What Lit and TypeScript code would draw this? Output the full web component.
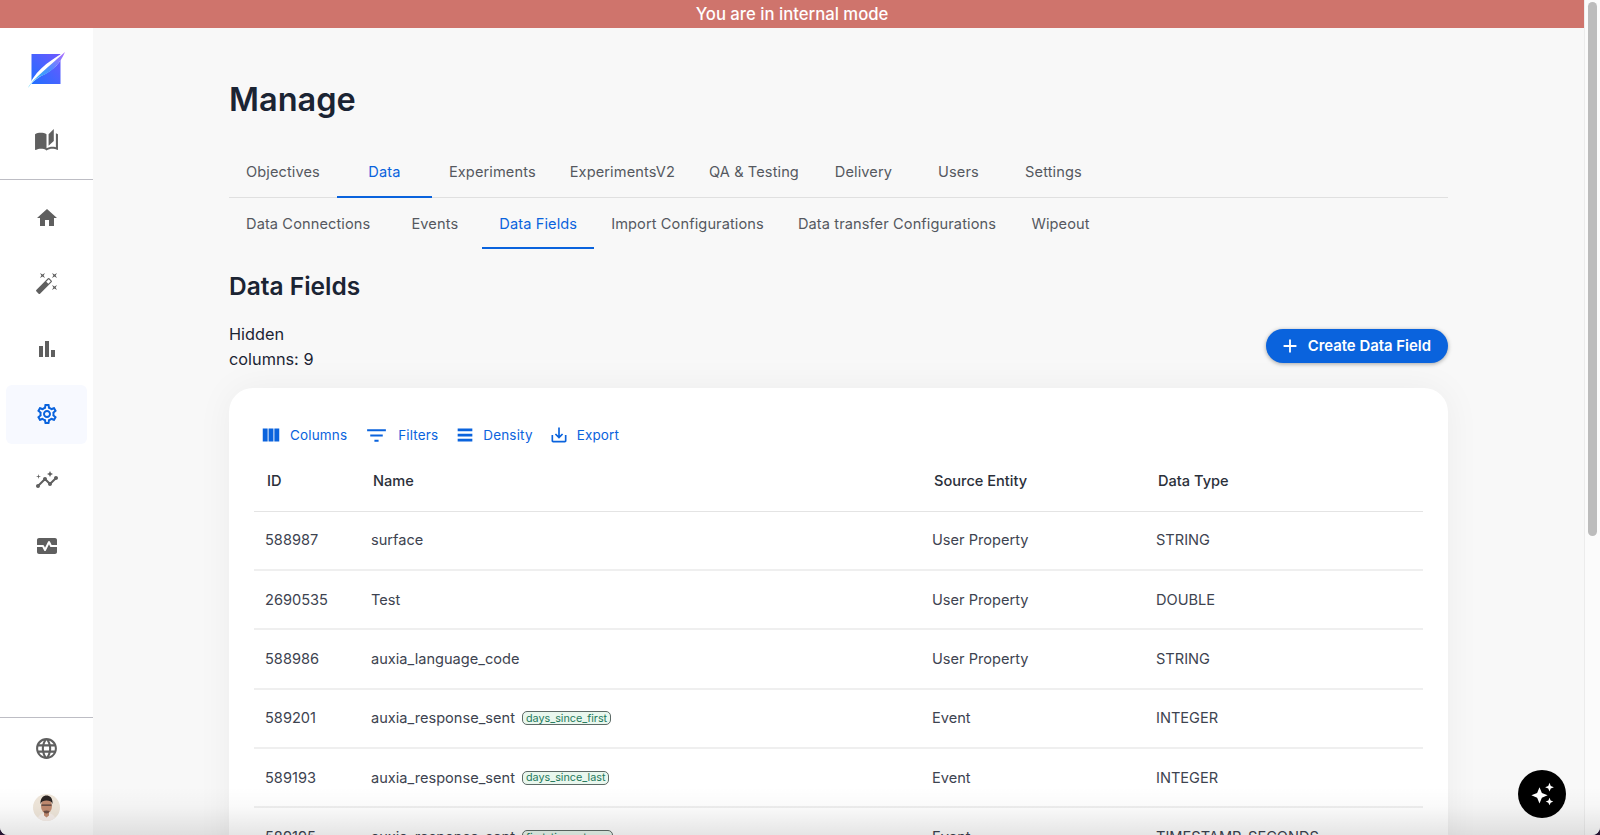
import { LitElement, html, css } from 'lit';
import { customElement } from 'lit/decorators.js';

const ICONS: Record<string, string> = {
  stories: 'M19 1l-5 5v11l5-4.5V1zM1 6v14.65c0 .25.25.5.5.5.1 0 .15-.05.25-.05C3.1 20.45 5.05 20 6.5 20c1.95 0 4.05.4 5.5 1.5V6c-1.45-1.1-3.55-1.5-5.5-1.5S2.45 4.9 1 6zm22 13.5V6c-.6-.45-1.25-.75-2-1v13.5c-1.1-.35-2.3-.5-3.5-.5-1.7 0-4.15.65-5.5 1.5v2c1.35-.85 3.8-1.5 5.5-1.5 1.65 0 3.35.3 4.75 1.05.1.05.15.05.25.05.25 0 .5-.25.5-.5v-1.1z',
  home: 'M10 20v-6h4v6h5v-8h3L12 3 2 12h3v8z',
  wand: 'M7.5 5.6 10 7 8.6 4.5 10 2 7.5 3.4 5 2l1.4 2.5L5 7zm12 9.8L17 14l1.4 2.5L17 19l2.5-1.4L22 19l-1.4-2.5L22 14zM22 2l-2.5 1.4L17 2l1.4 2.5L17 7l2.5-1.4L22 7l-1.4-2.5zm-7.63 5.29a.9959.9959 0 0 0-1.41 0L1.29 18.96c-.39.39-.39 1.02 0 1.41l2.34 2.34c.39.39 1.02.39 1.41 0L16.7 11.05c.39-.39.39-1.02 0-1.41l-2.33-2.35zm-1.03 5.49-2.12-2.12 2.44-2.44 2.12 2.12-2.44 2.44z',
  bars: 'M4 9h4v11H4zm12 4h4v7h-4zm-6-9h4v16h-4z',
  gear: 'M19.43 12.98c.04-.32.07-.64.07-.98 0-.34-.03-.66-.07-.98l2.11-1.65c.19-.15.24-.42.12-.64l-2-3.46c-.09-.16-.26-.25-.44-.25-.06 0-.12.01-.17.03l-2.49 1c-.52-.4-1.08-.73-1.69-.98l-.38-2.65C14.46 2.18 14.25 2 14 2h-4c-.25 0-.46.18-.49.42l-.38 2.65c-.61.25-1.17.59-1.69.98l-2.49-1c-.06-.02-.12-.03-.18-.03-.17 0-.34.09-.43.25l-2 3.46c-.13.22-.07.49.12.64l2.11 1.65c-.04.32-.07.65-.07.98 0 .33.03.66.07.98l-2.11 1.65c-.19.15-.24.42-.12.64l2 3.46c.09.16.26.25.44.25.06 0 .12-.01.17-.03l2.49-1c.52.4 1.08.73 1.69.98l.38 2.65c.03.24.24.42.49.42h4c.25 0 .46-.18.49-.42l.38-2.65c.61-.25 1.17-.59 1.69-.98l2.49 1c.06.02.12.03.18.03.17 0 .34-.09.43-.25l2-3.46c.12-.22.07-.49-.12-.64l-2.11-1.65zm-1.98-1.71c.04.31.05.52.05.73 0 .21-.02.43-.05.73l-.14 1.13.89.7 1.08.84-.7 1.21-1.27-.51-1.04-.42-.9.68c-.43.32-.84.56-1.25.73l-1.06.43-.16 1.13-.2 1.35h-1.4l-.19-1.35-.16-1.13-1.06-.43c-.43-.18-.83-.41-1.23-.71l-.91-.7-1.06.43-1.27.51-.7-1.21 1.08-.84.89-.7-.14-1.13c-.03-.31-.05-.54-.05-.74s.02-.43.05-.73l.14-1.13-.89-.7-1.08-.84.7-1.21 1.27.51 1.04.42.9-.68c.43-.32.84-.56 1.25-.73l1.06-.43.16-1.13.2-1.35h1.39l.19 1.35.16 1.13 1.06.43c.43.18.83.41 1.23.71l.91.7 1.06-.43 1.27-.51.7 1.21-1.07.85-.89.7.14 1.13zM12 8c-2.21 0-4 1.79-4 4s1.79 4 4 4 4-1.79 4-4-1.79-4-4-4zm0 6c-1.1 0-2-.9-2-2s.9-2 2-2 2 .9 2 2-.9 2-2 2z',
  insights: 'M21 8c-1.45 0-2.26 1.44-1.93 2.51l-3.55 3.56c-.3-.09-.74-.09-1.04 0l-2.55-2.55C12.27 10.45 11.46 9 10 9c-1.45 0-2.27 1.44-1.93 2.52l-4.56 4.55C2.44 15.74 1 16.55 1 18c0 1.1.9 2 2 2 1.45 0 2.26-1.44 1.93-2.51l4.55-4.56c.3.09.74.09 1.04 0l2.55 2.55C12.73 16.55 13.54 18 15 18c1.45 0 2.27-1.44 1.93-2.52l3.56-3.55c1.07.33 2.51-.48 2.51-1.93 0-1.1-.9-2-2-2zM15 9l.94-2.07L18 6l-2.06-.93L15 3l-.92 2.07L12 6l2.08.93zM3.5 11 4 9l2-.5L4 8l-.5-2L3 8l-2 .5L3 9z',
  monitor: 'M15.11 12.45 14 10.24l-3.11 6.21c-.16.34-.51.55-.89.55s-.73-.21-.89-.55L7.38 13H2v5c0 1.1.9 2 2 2h16c1.1 0 2-.9 2-2v-5h-6c-.38 0-.73-.21-.89-.55zM20 4H4c-1.1 0-2 .9-2 2v5h6c.38 0 .73.21.89.55L10 13.76l3.11-6.21c.34-.68 1.45-.68 1.79 0L16.62 11H22V6c0-1.1-.9-2-2-2z',
  globe: 'M11.99 2C6.47 2 2 6.48 2 12s4.47 10 9.99 10C17.52 22 22 17.52 22 12S17.52 2 11.99 2zm6.93 6h-2.95c-.32-1.25-.78-2.45-1.38-3.56 1.84.63 3.37 1.91 4.33 3.56zM12 4.04c.83 1.2 1.48 2.53 1.91 3.96h-3.82c.43-1.43 1.08-2.76 1.91-3.96zM4.26 14C4.1 13.36 4 12.69 4 12s.1-1.36.26-2h3.38c-.08.66-.14 1.32-.14 2 0 .68.06 1.34.14 2H4.26zm.82 2h2.95c.32 1.25.78 2.45 1.38 3.56-1.84-.63-3.37-1.9-4.33-3.56zm2.95-8H5.08c.96-1.66 2.49-2.93 4.33-3.56C8.81 5.55 8.35 6.75 8.03 8zM12 19.96c-.83-1.2-1.48-2.53-1.91-3.96h3.82c-.43 1.43-1.08 2.76-1.91 3.96zM14.34 14H9.66c-.09-.66-.16-1.32-.16-2 0-.68.07-1.35.16-2h4.68c.09.65.16 1.32.16 2 0 .68-.07 1.34-.16 2zm.25 5.56c.6-1.11 1.06-2.31 1.38-3.56h2.95c-.96 1.65-2.49 2.93-4.33 3.56zM16.36 14c.08-.66.14-1.32.14-2 0-.68-.06-1.34-.14-2h3.38c.16.64.26 1.31.26 2s-.1 1.36-.26 2h-3.38z',
  columns: 'M14.67 5v14H9.33V5h5.34zm1 14H21V5h-5.33v14zm-7.34 0V5H3v14h5.33z',
  filter: 'M10 18h4v-2h-4v2zM3 6v2h18V6H3zm3 7h12v-2H6v2z',
  density: 'M4 5h16v3H4zM4 10.5h16v3H4zM4 16h16v3H4z',
  export: 'M19 12v7H5v-7H3v7c0 1.1.9 2 2 2h14c1.1 0 2-.9 2-2v-7h-2zm-6 .67l2.59-2.58L17 11.5l-5 5-5-5 1.41-1.41L11 12.67V3h2z',
  plus: 'M19 13h-6v6h-2v-6H5v-2h6V5h2v6h6v2z',
  sparkle: 'M10 6.5l1.9 4.6 4.6 1.9-4.6 1.9L10 19.5l-1.9-4.6L3.5 13l4.6-1.9zM18 3l1 2.5 2.5 1-2.5 1L18 10l-1-2.5-2.5-1 2.5-1zM18 15l.9 2.1 2.1.9-2.1.9L18 21l-.9-2.1L15 18l2.1-.9z',
};

const icon = (name: string, cls = '') =>
  html`<svg class="icon ${cls}" viewBox="0 0 24 24"><path d=${ICONS[name]}></path></svg>`;

const NAV = ['home', 'wand', 'bars', 'gear', 'insights', 'monitor'];
const TABS = ['Objectives', 'Data', 'Experiments', 'ExperimentsV2', 'QA & Testing', 'Delivery', 'Users', 'Settings'];
const SUBTABS = ['Data Connections', 'Events', 'Data Fields', 'Import Configurations', 'Data transfer Configurations', 'Wipeout'];
const TOOLS = [
  ['columns', 'Columns'],
  ['filter', 'Filters'],
  ['density', 'Density'],
  ['export', 'Export'],
];
const ROWS = [
  ['588987', 'surface', '', 'User Property', 'STRING'],
  ['2690535', 'Test', '', 'User Property', 'DOUBLE'],
  ['588986', 'auxia_language_code', '', 'User Property', 'STRING'],
  ['589201', 'auxia_response_sent', 'days_since_first', 'Event', 'INTEGER'],
  ['589193', 'auxia_response_sent', 'days_since_last', 'Event', 'INTEGER'],
  ['589195', 'auxia_response_sent', 'first_time_stamp', 'Event', 'TIMESTAMP_SECONDS'],
];

@customElement('app-root')
export class AppRoot extends LitElement {
  static styles = css`
    :host {
      display: block;
      position: relative;
      height: 835px;
      overflow: hidden;
      background: #2a1838;
      font-family: Inter, "Liberation Sans", sans-serif;
      color: #1b2433;
    }
    .window {
      display: flex;
      height: 835px;
      overflow: hidden;
      background: #fff;
      border-radius: 0 0 8px 8px;
    }
    .content {
      flex: 1;
      min-width: 0;
      display: flex;
      flex-direction: column;
    }
    .banner {
      height: 28px;
      flex: none;
      background: #cf746c;
      color: #fff;
      font-size: 16.7px;
      font-weight: 500;
      line-height: 29px;
      text-align: center;
    }
    .body {
      flex: 1;
      min-height: 0;
      display: flex;
    }
    .scroll {
      flex: none;
      width: 16px;
      box-sizing: border-box;
      border-left: 1px solid #ececec;
      background: #fbfbfb;
      padding: 2px 3px 0 3px;
    }
    .thumb {
      width: 9px;
      height: 534px;
      background: #bcbcbc;
      border-radius: 5px;
    }
    .icon {
      display: block;
      fill: currentColor;
      flex: none;
    }

    .side {
      flex: none;
      width: 93px;
      background: #fff;
      display: flex;
      flex-direction: column;
      color: #5f5f5f;
    }
    .side-top {
      display: flex;
      flex-direction: column;
      align-items: center;
      padding: 24px 0 26px;
      border-bottom: 1.5px solid #bdbdc4;
    }
    .logo {
      display: block;
      width: 38px;
      height: 36px;
    }
    .side-top .icon {
      width: 25px;
      height: 25px;
      margin-top: 40px;
    }
    .nav {
      display: flex;
      flex-direction: column;
      gap: 6.2px;
      padding: 8px 6px 0;
    }
    .nav-item {
      height: 59.4px;
      display: flex;
      align-items: center;
      justify-content: center;
      border-radius: 6px;
    }
    .nav-item .icon {
      width: 24px;
      height: 24px;
    }
    .nav-item.active {
      background: #f7f9ff;
      color: #0a63dd;
    }
    .side-foot {
      margin-top: auto;
      border-top: 1.5px solid #bdbdc4;
      display: flex;
      flex-direction: column;
      align-items: center;
      padding: 18px 0 14px;
      gap: 33px;
    }
    .side-foot .icon {
      width: 25px;
      height: 25px;
    }
    .avatar {
      display: block;
      width: 27px;
      height: 27px;
    }

    .main {
      flex: 1;
      min-width: 0;
      background: #f8f8f8;
      padding: 52px 136px 0;
      overflow: hidden;
    }
    h1 {
      margin: 0 0 27px;
      font-size: 32.5px;
      line-height: 40px;
      font-weight: 600;
    }
    .tabs {
      display: flex;
    }
    .tabs.top {
      border-bottom: 1px solid #e0e0e0;
    }
    .tab {
      box-sizing: border-box;
      min-width: 95px;
      height: 50.500px;
      padding: 1px 17px 0;
      display: flex;
      align-items: center;
      justify-content: center;
      font-size: 14.6px;
      font-weight: 400;
      letter-spacing: 0.1px;
      color: #55585f;
      white-space: nowrap;
    }
    .tab.active {
      color: #0a63dd;
      box-shadow: inset 0 -2px 0 #0a63dd;
    }
    .tabs.top .tab {
      margin-bottom: -1px;
      height: 51px;
      padding: 0 17px 2px;
    }
    h2 {
      margin: 21.500px 0 20px;
      font-size: 24.5px;
      line-height: 32px;
      font-weight: 600;
    }
    .head-row {
      display: flex;
      align-items: center;
      justify-content: space-between;
    }
    .hidden-count {
      width: 110px;
      font-size: 16.3px;
      line-height: 25px;
    }
    .create {
      height: 34px;
      margin-bottom: 2px;
      display: flex;
      align-items: center;
      gap: 7px;
      box-sizing: border-box;
      padding: 0 17px 0 13px;
      border-radius: 17px;
      background: #0a63dd;
      color: #fff;
      font-size: 14.9px;
      font-weight: 600;
      box-shadow: 0 1px 4px rgba(0, 0, 0, 0.35);
    }
    .create .icon {
      width: 22px;
      height: 22px;
    }
    .card {
      margin-top: 16px;
      background: #fff;
      border-radius: 24px;
      padding: 29px 25px 0;
      box-shadow: 0 0 36px rgba(0, 0, 0, 0.05);
    }
    .toolbar {
      display: flex;
      align-items: center;
      gap: 16px;
      height: 36px;
      padding-left: 6px;
    }
    .tool {
      display: flex;
      align-items: center;
      gap: 8px;
      font-size: 13.5px;
      font-weight: 400;
      letter-spacing: 0.15px;
      color: #0a63dd;
    }
    .tool .icon {
      width: 22px;
      height: 22px;
    }
    .tool.filter {
      margin-left: 1px;
      gap: 9px;
    }
    .tool.filter .icon {
      width: 25px;
      height: 25px;
    }
    .tool.density {
      gap: 7px;
    }
    .tool.export .icon {
      width: 20px;
      height: 20px;
    }
    .row {
      display: grid;
      grid-template-columns: 105px 560px 225px 1fr;
      align-items: center;
      height: 59.4px;
      box-sizing: border-box;
      border-bottom: 2px solid #efefef;
      font-size: 14.6px;
      color: #3d4350;
    }
    .row > div {
      padding-left: 12px;
    }
    .row > div:first-child {
      padding-left: 11px;
    }
    .row > div:nth-child(3) {
      padding-left: 13px;
    }
    .row.header {
      height: 58.5px;
      padding-bottom: 2px;
      border-bottom: 1px solid #e4e4e4;
      font-weight: 500;
      color: #2b303a;
    }
    .row.header > div {
      padding-left: 14px;
    }
    .row.header > div:first-child {
      padding-left: 13px;
    }
    .row.header > div:nth-child(3) {
      padding-left: 15px;
    }
    .name {
      display: flex;
      align-items: center;
      gap: 7px;
    }
    .badge {
      box-sizing: border-box;
      height: 14px;
      padding: 0 3px;
      display: flex;
      align-items: center;
      border: 1px solid #5d6a66;
      border-radius: 5px;
      background: #e9f7ee;
      color: #1f7a5c;
      font-size: 10.8px;
      font-weight: 400;
    }
    .fade {
      position: absolute;
      left: 0;
      right: 0;
      bottom: 0;
      height: 48px;
      pointer-events: none;
      background: linear-gradient(to bottom, rgba(0, 0, 0, 0), rgba(0, 0, 0, 0.02) 40%, rgba(0, 0, 0, 0.1));
    }
    .fab {
      position: absolute;
      left: 1518px;
      top: 770px;
      width: 48px;
      height: 48px;
      display: flex;
      align-items: center;
      justify-content: center;
      border-radius: 50%;
      background: #000;
      color: #fff;
      z-index: 2;
    }
    .fab .icon {
      width: 30px;
      height: 30px;
    }
  `;

  render() {
    return html`
      <div class="window">
        <div class="content">
          <div class="banner">You are in internal mode</div>
          <div class="body">
            ${this._sidebar()}
            <div class="main">
              <h1>Manage</h1>
              <div class="tabs top">
                ${TABS.map((t) => html`<div class="tab ${t === 'Data' ? 'active' : ''}">${t}</div>`)}
              </div>
              <div class="tabs">
                ${SUBTABS.map((t) => html`<div class="tab ${t === 'Data Fields' ? 'active' : ''}">${t}</div>`)}
              </div>
              <h2>Data Fields</h2>
              <div class="head-row">
                <div class="hidden-count">Hidden columns: 9</div>
                <div class="create">${icon('plus')}Create Data Field</div>
              </div>
              ${this._card()}
            </div>
          </div>
        </div>
        <div class="scroll"><div class="thumb"></div></div>
      </div>
      <div class="fade"></div>
      <div class="fab">${icon('sparkle')}</div>
    `;
  }

  _sidebar() {
    return html`
      <div class="side">
        <div class="side-top">
          <svg class="logo" viewBox="0 0 38 36">
            <defs>
              <linearGradient id="sq" x1="0" y1="1" x2="1" y2="0">
                <stop offset="0" stop-color="#1f6fff"></stop>
                <stop offset="1" stop-color="#6f58ff"></stop>
              </linearGradient>
              <linearGradient id="leaf" x1="0" y1="1" x2="1" y2="0">
                <stop offset="0" stop-color="#1fc8f5"></stop>
                <stop offset="0.55" stop-color="#4d8dff"></stop>
                <stop offset="1" stop-color="#b26bff"></stop>
              </linearGradient>
            </defs>
            <rect x="3.500" y="2" width="29" height="30" fill="url(#sq)"></rect>
            <path d="M0 36 C5 22 18 10 37 0 C33 10 25 19 13 24 C8 27 3 31 0 36Z" fill="#fff"></path>
            <path d="M0 36 C5 27 17 18 37 0 C32 12 24 20 12 24.500 C7 27 3 31 0 36Z" fill="url(#leaf)"></path>
          </svg>
          ${icon('stories')}
        </div>
        <div class="nav">
          ${NAV.map((n) => html`<div class="nav-item ${n === 'gear' ? 'active' : ''}">${icon(n)}</div>`)}
        </div>
        <div class="side-foot">
          ${icon('globe')}
          <svg class="avatar" viewBox="0 0 27 27">
            <clipPath id="av"><circle cx="13.5" cy="13.5" r="13.5"></circle></clipPath>
            <g clip-path="url(#av)">
              <rect width="27" height="27" fill="#efe6da"></rect>
              <path d="M4 27c1-6 4.500-8 9.500-8s8.500 2 9.500 8z" fill="#f6eeea"></path>
              <path d="M11 18h5v3.500l-2.500 2-2.500-2z" fill="#c08a70"></path>
              <ellipse cx="13.500" cy="12" rx="5.500" ry="7.500" fill="#c08a70"></ellipse>
              <path d="M7.500 10c-.5-6 3-8.500 6-8.500s6.500 2 6 8.500c-1-3-3-3.500-6-3.500s-5 .5-6 3.500z" fill="#2a2322"></path>
              <path d="M8.500 10.500h10v1.200h-10z" fill="#4a3a38"></path>
              <path d="M10.500 17c2-.8 4-.8 6 0-.5 1.800-1.500 2.500-3 2.500s-2.500-.7-3-2.500z" fill="#6b4c42"></path>
            </g>
          </svg>
        </div>
      </div>
    `;
  }

  _card() {
    return html`
      <div class="card">
        <div class="toolbar">
          ${TOOLS.map(([ic, label]) => html`<div class="tool ${ic}">${icon(ic)}${label}</div>`)}
        </div>
        <div class="row header">
          <div>ID</div>
          <div>Name</div>
          <div>Source Entity</div>
          <div>Data Type</div>
        </div>
        ${ROWS.map(
          ([id, name, tag, source, type]) => html`
            <div class="row">
              <div>${id}</div>
              <div class="name">${name}${tag ? html`<span class="badge">${tag}</span>` : ''}</div>
              <div>${source}</div>
              <div>${type}</div>
            </div>
          `
        )}
      </div>
    `;
  }
}
